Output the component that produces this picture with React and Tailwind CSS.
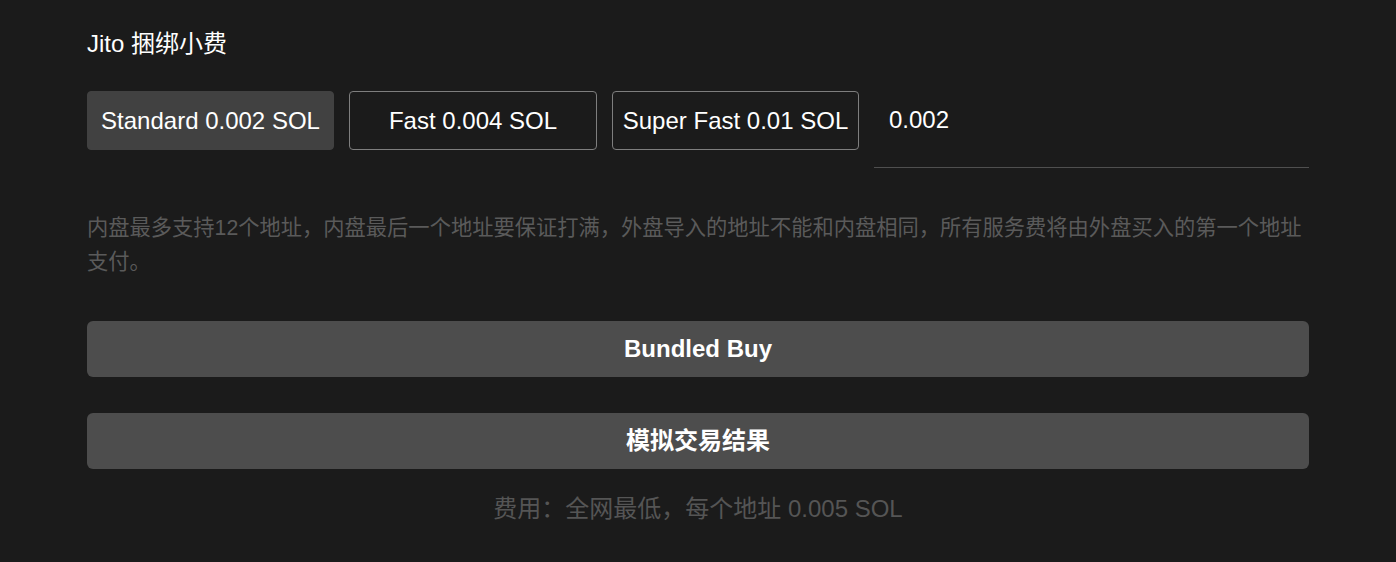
import React, { useState } from "react";

const tips = [
  { label: "Standard 0.002 SOL", value: "0.002", w: "w-[247px]" },
  { label: "Fast 0.004 SOL", value: "0.004", w: "w-[248px]" },
  { label: "Super Fast 0.01 SOL", value: "0.01", w: "w-[247px]" },
];

export default function App() {
  const [tip, setTip] = useState("0.002");

  return (
    <div
      className="min-h-[562px] bg-[#1b1b1b] text-white"
      style={{ fontFamily: '"Liberation Sans", Arial, "Noto Sans CJK SC", sans-serif' }}
    >
      <div className="w-[1222px] mx-auto pt-[26px]">
        <h2 className="text-[24px] leading-[36px]">Jito 捆绑小费</h2>

        {/* 小费选项 */}
        <div className="mt-[29px] flex items-start gap-[15px]">
          {tips.map((t) => (
            <button
              key={t.label}
              onClick={() => setTip(t.value)}
              className={
                tip === t.value
                  ? `${t.w} h-[59px] shrink-0 rounded-[4px] border border-[#414141] bg-[#414141] text-[24px] whitespace-nowrap`
                  : `${t.w} h-[59px] shrink-0 rounded-[4px] border border-[#7e7e7e] bg-transparent text-[24px] whitespace-nowrap`
              }
            >
              {t.label}
            </button>
          ))}
          <input
            value={tip}
            onChange={(e) => setTip(e.target.value)}
            className="flex-1 min-w-0 h-[77px] pb-[18px] px-[15px] bg-transparent border-b border-[#4f4f4f] text-[24px] outline-none"
          />
        </div>

        <p className="mt-[43px] text-[21.28px] leading-[34px] text-[#5a5a5a]">
          内盘最多支持12个地址，内盘最后一个地址要保证打满，外盘导入的地址不能和内盘相同，所有服务费将由外盘买入的第一个地址支付。
        </p>

        <button className="mt-[42px] w-full h-[56px] rounded-[6px] bg-[#4d4d4d] text-[24px] font-bold">
          Bundled Buy
        </button>
        <button className="mt-[36px] w-full h-[56px] rounded-[6px] bg-[#4d4d4d] text-[24px] font-bold">
          模拟交易结果
        </button>

        <p className="mt-[22px] text-center text-[24px] leading-[36px] text-[#555555]">
          费用：全网最低，每个地址 0.005 SOL
        </p>
      </div>
    </div>
  );
}
